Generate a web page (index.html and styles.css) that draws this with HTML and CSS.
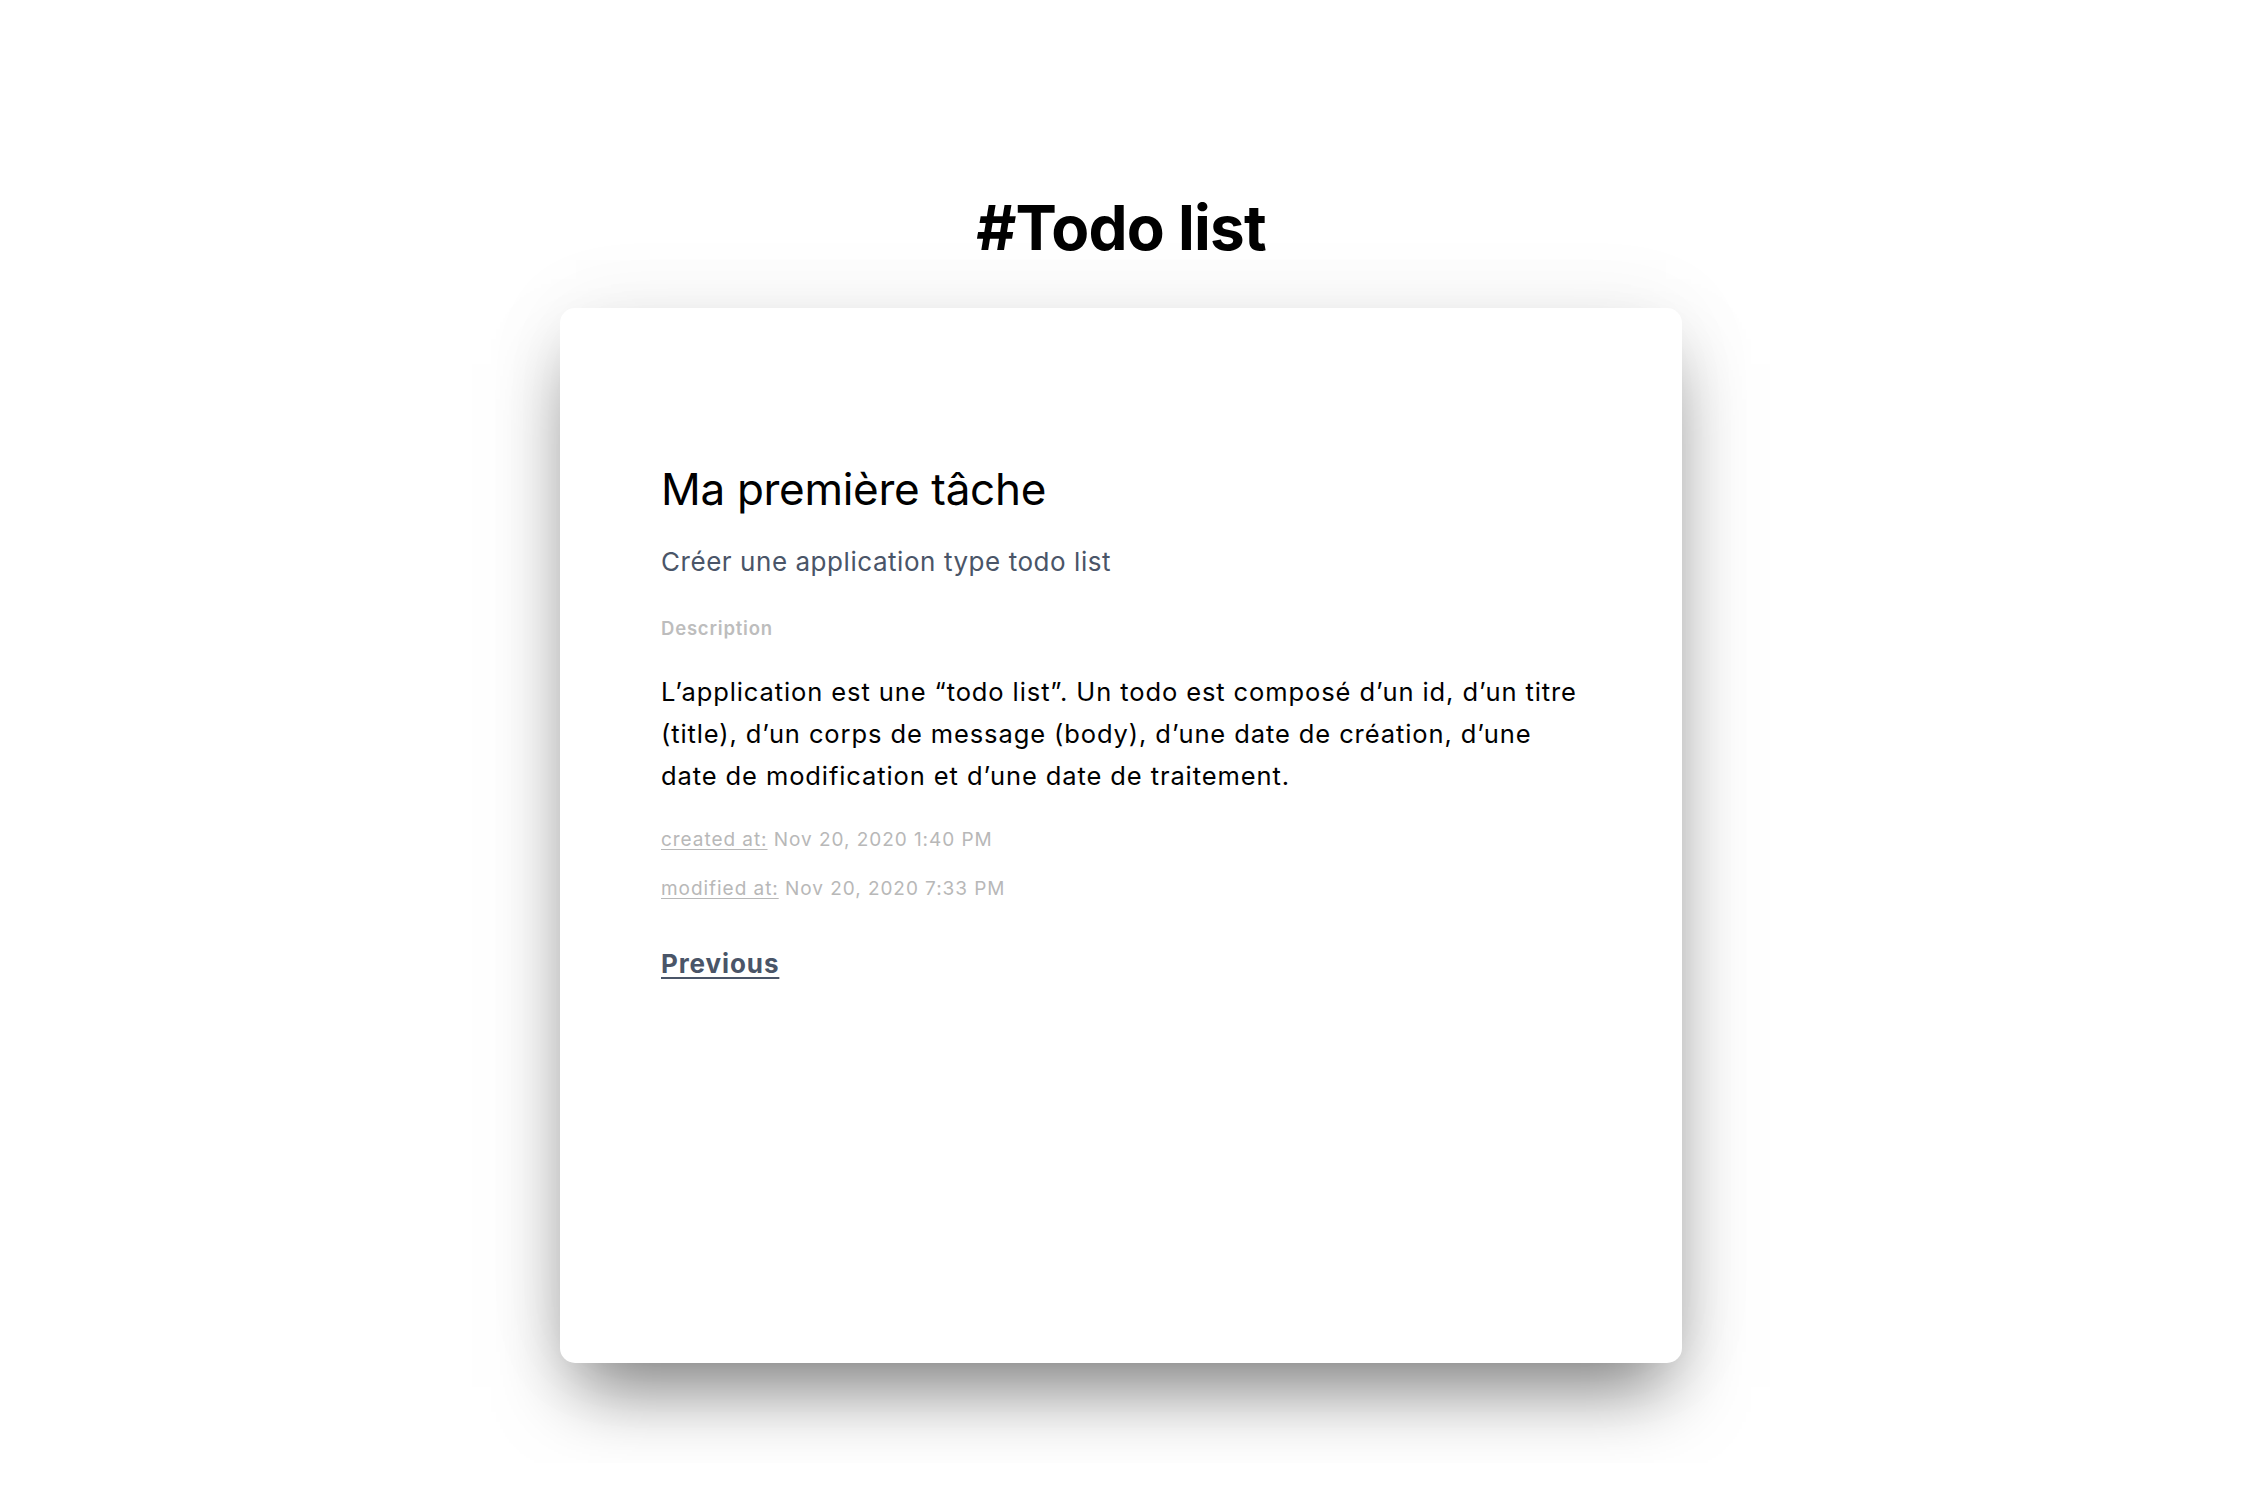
FILE: index.html
```html
<!DOCTYPE html>
<html lang="fr">
<head>
<meta charset="utf-8">
<title>Todo list</title>
<link rel="stylesheet" href="styles.css">
</head>
<body>
<main class="page">
  <h1 class="page-title">#Todo list</h1>
  <section class="card">
    <h2 class="todo-title">Ma première tâche</h2>
    <p class="todo-subtitle">Créer une application type todo list</p>
    <p class="label">Description</p>
    <p class="todo-body">L’application est une “todo list”. Un todo est composé d’un id, d’un titre (title), d’un corps de message (body), d’une date de création, d’une date de modification et d’une date de traitement.</p>
    <p class="meta"><span class="meta-key">created at:</span> Nov 20, 2020 1:40 PM</p>
    <p class="meta"><span class="meta-key">modified at:</span> Nov 20, 2020 7:33 PM</p>
    <a class="back-link" href="#">Previous</a>
  </section>
</main>
</body>
</html>
```

FILE: styles.css
```css
html, body {
  margin: 0;
  padding: 0;
  background: #ffffff;
}

body {
  font-family: Inter, "Noto Sans", "Liberation Sans", sans-serif;
  color: #000;
}

.page {
  display: flex;
  flex-direction: column;
  align-items: center;
  padding-top: 190px;
  padding-bottom: 100px;
}

.page-title {
  margin: 0;
  font-size: 62px;
  line-height: 76px;
  font-weight: 700;
  letter-spacing: -0.8px;
}

.card {
  margin-top: 42px;
  width: 1122px;
  min-height: 1055px;
  box-sizing: border-box;
  padding: 155px 98px 60px 101px;
  background: #fff;
  border-radius: 15px;
  box-shadow: 0 40px 70px -16px rgba(0, 0, 0, 0.5), 0 0 90px rgba(0, 0, 0, 0.06);
  display: flex;
  flex-direction: column;
  align-items: flex-start;
}

.todo-title {
  margin: 0;
  font-size: 44px;
  line-height: 52px;
  font-weight: 400;
  letter-spacing: -0.3px;
}

.todo-subtitle {
  margin: 29px 0 0;
  font-size: 26px;
  line-height: 36px;
  color: #4a5568;
  letter-spacing: 0.55px;
}

.label {
  margin: 36px 0 0;
  font-size: 18.5px;
  line-height: 24px;
  font-weight: 600;
  color: #bdbdbd;
  letter-spacing: 0.8px;
}

.todo-body {
  margin: 31px 0 0;
  max-width: 926px;
  font-size: 25.5px;
  line-height: 42px;
  color: #000;
  letter-spacing: 0.9px;
}

.meta {
  margin: 29px 0 0;
  font-size: 19px;
  line-height: 28px;
  color: #b8b8b8;
  letter-spacing: 0.95px;
}

.meta + .meta {
  margin-top: 21px;
}

.meta-key {
  text-decoration: underline;
  text-underline-offset: 3px;
}

.back-link {
  margin-top: 43px;
  font-size: 26px;
  line-height: 36px;
  font-weight: 700;
  color: #4a5568;
  text-decoration: underline;
  text-underline-offset: 4px;
  text-decoration-thickness: 2px;
  letter-spacing: 0.9px;
}
```
